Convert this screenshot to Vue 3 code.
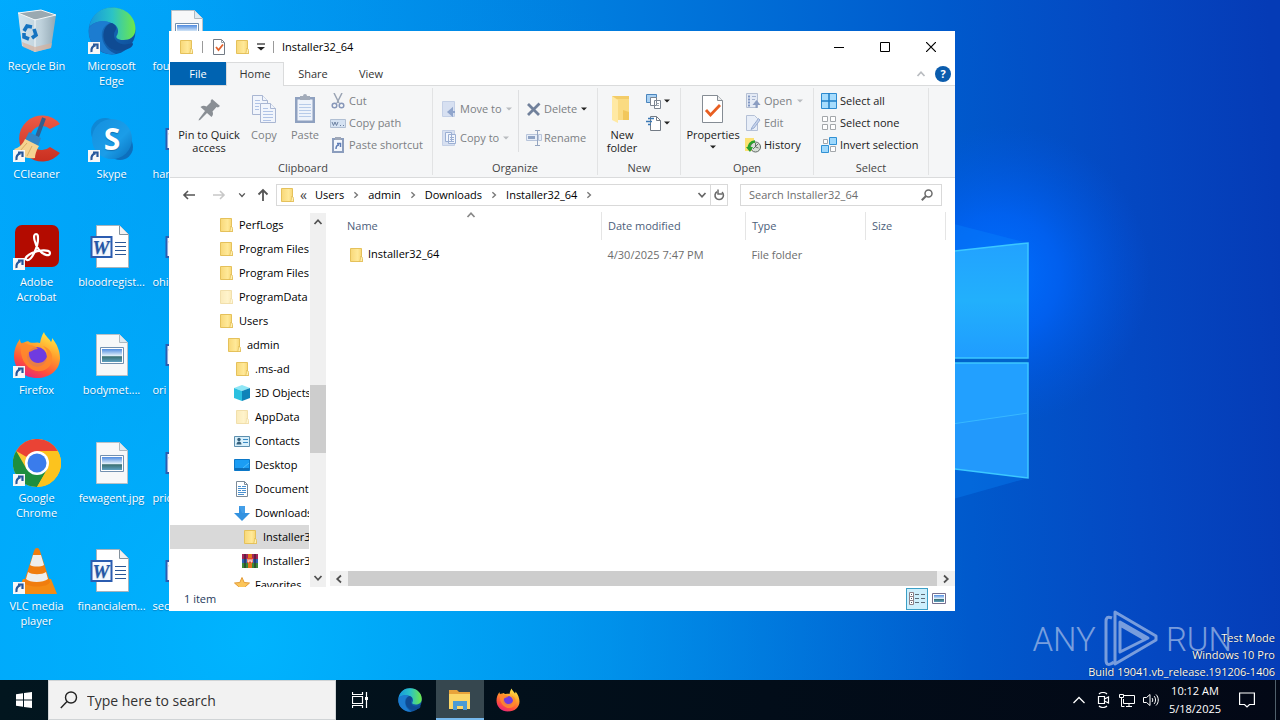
<template>
  <div class="screen">
    <!-- icon sprite -->
    <svg class="sprite" aria-hidden="true">
      <defs>
        <linearGradient id="gFolder" x1="0" x2="1"><stop offset="0" stop-color="#f8d878" /><stop offset="0.6" stop-color="#ffe999" /><stop offset="1" stop-color="#f6d26b" /></linearGradient>
        <linearGradient id="gEdgeTop" x1="0" x2="1"><stop offset="0" stop-color="#1597dd" /><stop offset="0.5" stop-color="#2bc3c6" /><stop offset="1" stop-color="#6ee848" /></linearGradient>
        <linearGradient id="gEdgeLow" x1="0" y1="0" x2="1" y2="1"><stop offset="0" stop-color="#1b7fd0" /><stop offset="1" stop-color="#0d4a94" /></linearGradient>
        <linearGradient id="gFox" x1="0.8" y1="0" x2="0.3" y2="1"><stop offset="0" stop-color="#fff04a" /><stop offset="0.4" stop-color="#ffa02c" /><stop offset="0.75" stop-color="#ff4f3c" /><stop offset="1" stop-color="#e5247c" /></linearGradient>
        <linearGradient id="gSkype" x1="0" y1="0" x2="1" y2="1"><stop offset="0" stop-color="#1490df" /><stop offset="0.6" stop-color="#1b9de8" /><stop offset="1" stop-color="#0a70bd" /></linearGradient>
        <linearGradient id="gBin" x1="0" x2="1"><stop offset="0" stop-color="#e4e9ec" /><stop offset="0.6" stop-color="#cfd5d9" /><stop offset="1" stop-color="#9fa8ae" /></linearGradient>
        <linearGradient id="gPhoto" x1="0" y1="0" x2="0" y2="1"><stop offset="0" stop-color="#4f8be0" /><stop offset="0.5" stop-color="#dcecf8" /><stop offset="0.6" stop-color="#3c7274" /><stop offset="1" stop-color="#5d9fc0" /></linearGradient>
        <linearGradient id="gRed" x1="0" y1="0" x2="0" y2="1"><stop offset="0" stop-color="#ec5b46" /><stop offset="1" stop-color="#c92f20" /></linearGradient>
      </defs>

      <symbol id="i-folder" viewBox="0 0 16 16">
        <path d="M2.500 1.500h11v10l1 1v2h-12z" fill="url(#gFolder)" stroke="#e5c15b" />
        <path d="M11.500 14.500c1-1 1-4 1-5l2 1v4z" fill="#fff0b0" stroke="#ddb548" stroke-width=".6" />
      </symbol>
      <symbol id="i-3d" viewBox="0 0 16 16">
        <path d="M0 3l8-3 8 3-8 3z" fill="#8fe6f5" /><path d="M0 3l8 3v10l-8-3z" fill="#2bc0e0" /><path d="M16 3L8 6v10l8-3z" fill="#0f83b8" />
      </symbol>
      <symbol id="i-contacts" viewBox="0 0 16 16">
        <path d="M.5 3.500h15v10H.5z" fill="#d7effb" stroke="#5d8fae" /><circle cx="5" cy="6.500" r="1.700" fill="#35607c" /><path d="M2.500 11.500c0-4 5-4 5 0z" fill="#35607c" /><path d="M9 6.500h5M9 9.500h5" stroke="#3b8bc4" />
      </symbol>
      <symbol id="i-desktop" viewBox="0 0 16 16">
        <path d="M.5 2.500h15v11H.5z" fill="#1b9df4" stroke="#0c78c8" /><path d="M1 12h14" stroke="#0a5fa6" stroke-width="1.500" /><path d="M9 11l6-5" stroke="#51bdfc" />
      </symbol>
      <symbol id="i-docs" viewBox="0 0 16 16">
        <path d="M2.500.5h8l3 3v12h-11z" fill="#fff" stroke="#7c8b99" /><path d="M10.500.5v3h3" fill="none" stroke="#7c8b99" /><path d="M4 5.500h3M8 5.500h4M4 7.500h8M4 9.500h3M8 9.500h4M4 11.500h8M4 13.500h6" stroke="#4a90cf" />
      </symbol>
      <symbol id="i-downloads" viewBox="0 0 16 16">
        <path d="M5 1h6v7h5l-8 8-8-8h5z" fill="#3392e0" /><path d="M5 1h6v7h5L8 8z" fill="#4ea6ec" opacity=".6" />
      </symbol>
      <symbol id="i-rar" viewBox="0 0 16 16">
        <path d="M0 1h16v5H0z" fill="#a52559" /><path d="M0 6h16v4H0z" fill="#2f62b5" /><path d="M0 10h16v5H0z" fill="#3b8a3a" /><path d="M6 1h4v14H6z" fill="#e2761b" /><path d="M5 5h6v5H5z" fill="#e24b32" /><path d="M6 6v3h1V7h2v2h1V6" stroke="#fff" fill="none" stroke-width=".8" /><path d="M3 1v14M13 1v14" stroke="#251a2b" />
      </symbol>
      <symbol id="i-star" viewBox="0 0 16 16">
        <path d="M8 .5l2.200 5 5.300.5-4 3.500 1.200 5.500L8 12.200 3.300 15l1.200-5.500L.5 6l5.300-.5z" fill="#fbc55a" stroke="#e39a35" />
      </symbol>

      <symbol id="i-check" viewBox="0 0 16 16">
        <path d="M2.500.5h8l3 3v12h-11z" fill="#fff" stroke="#737b85" /><path d="M10.500.5v3h3" fill="none" stroke="#9aa0a6" /><path d="M5 8l2.500 3L12 5.500" fill="none" stroke="#e2622c" stroke-width="1.800" />
      </symbol>
      <symbol id="i-caret" viewBox="0 0 6 6"><path d="M0 1.500h6L3 4.500z" fill="currentColor" /></symbol>
      <symbol id="i-menu" viewBox="0 0 8 8"><path d="M0 1h8" stroke="#222" stroke-width="1.200" /><path d="M0 4h8L4 7.500z" fill="#222" /></symbol>
      <symbol id="i-chev-down" viewBox="0 0 10 10"><path d="M1.500 3L5 6.800 8.500 3" fill="none" stroke="currentColor" stroke-width="1.700" /></symbol>
      <symbol id="i-chev-up" viewBox="0 0 10 10"><path d="M1.500 7L5 3.200 8.500 7" fill="none" stroke="currentColor" stroke-width="1.700" /></symbol>
      <symbol id="i-chev-left" viewBox="0 0 10 10"><path d="M7 1.500L3.200 5 7 8.500" fill="none" stroke="currentColor" stroke-width="1.700" /></symbol>
      <symbol id="i-chev-right" viewBox="0 0 10 10"><path d="M3 1.500L6.800 5 3 8.500" fill="none" stroke="currentColor" stroke-width="1.700" /></symbol>

      <symbol id="i-pin" viewBox="0 0 32 32">
        <path d="M19 6l8 7-2 1.500-1.500-.5-4 4.500c1 2 .5 4-1 5.500l-4.500-4L7 27l-1.500.5L6 26l6-8-4.500-4c2-1.500 4-1.500 6-.5l4.500-4.500L17.500 8z" fill="#8a8f95" />
      </symbol>
      <symbol id="i-copy" viewBox="0 0 32 32">
        <g fill="#f1f5fc" stroke="#a9b6d2"><path d="M4.500 2.500h10l5 5v14h-15z" /><path d="M14.500 2.500v5h5" /><path d="M12.500 10.500h10l5 5v14h-15z" /><path d="M22.500 10.500v5h5" /></g>
        <path d="M7 7.500h5M7 10.500h5M7 13.500h4M7 16.500h4M15 15.500h5M15 18.500h10M15 21.500h10M15 24.500h10M15 27.500h8" stroke="#b0c3e6" />
      </symbol>
      <symbol id="i-paste" viewBox="0 0 32 32">
        <path d="M6 4h20v26H6z" fill="#8fa1c0" /><path d="M8.500 6.500h15v21h-15z" fill="#eef3fb" /><path d="M11 3h3a2 2 0 0 1 4 0h3v4H11z" fill="#a2abb9" /><path d="M10 11.500h12M10 14.500h12M10 17.500h12M10 20.500h12M10 23.500h12" stroke="#b7cbe9" />
      </symbol>
      <symbol id="i-cut" viewBox="0 0 16 16">
        <path d="M4 0l5 10M12 0L7 10" stroke="#9aa4b4" stroke-width="1.500" /><circle cx="4.500" cy="12.500" r="2.300" fill="none" stroke="#8797b9" stroke-width="1.500" /><circle cx="11.500" cy="12.500" r="2.300" fill="none" stroke="#8797b9" stroke-width="1.500" />
      </symbol>
      <symbol id="i-path" viewBox="0 0 16 16">
        <path d="M.5 4.500h15v8H.5z" fill="#d5e2f2" stroke="#b0bfd3" /><path d="M2 7l1.500 3.500L5 7l1.500 3.500L8 7M10 10.500h1M13 10.500h1" stroke="#6c81a1" fill="none" />
      </symbol>
      <symbol id="i-shortcut" viewBox="0 0 16 16">
        <path d="M2 1h12v15H2z" fill="#8b9dbd" /><path d="M4 3h8v11H4z" fill="#f2f6fc" /><path d="M5 0h6v3H5z" fill="#9fa8b8" /><path d="M6 12c0-3 1-4 3-4M7 6.500h3.500V10" fill="none" stroke="#5d7cb5" stroke-width="1.500" />
      </symbol>
      <symbol id="i-moveto" viewBox="0 0 16 16">
        <path d="M.5.5h12v15H.5z" fill="#d7e0f1" stroke="#c4d0e6" /><path d="M13 11H8M10 8l-3.500 3 3.500 3z" stroke="#90a5cc" stroke-width="2" fill="#90a5cc" />
      </symbol>
      <symbol id="i-copyto" viewBox="0 0 16 16">
        <path d="M.5.5h12v15H.5z" fill="#d7e0f1" stroke="#c4d0e6" /><path d="M3.500 2.500h6v9h-6zM6.500 4.500h7v9h-7z" fill="#f1f5fc" stroke="#9bafd3" /><path d="M8 7.500h4M8 9.500h4M8 11.500h4" stroke="#9bafd3" />
      </symbol>
      <symbol id="i-delete" viewBox="0 0 16 16"><path d="M2 3l11 11M13.500 2.500L2 14" stroke="#71819b" stroke-width="2.800" /></symbol>
      <symbol id="i-rename" viewBox="0 0 16 16">
        <path d="M.5 4.500h11v6H.5zM12.500 4.500h3v6h-3z" fill="#e7eef8" stroke="#b7c4da" /><path d="M2 7.500h7" stroke="#8fa3c4" stroke-width="3" /><path d="M9 .5h5M9 15.500h5M11.500.5v15" stroke="#94a4bf" />
      </symbol>
      <symbol id="i-bigfolder" viewBox="0 0 32 32">
        <path d="M6 3h17v24H6z" fill="#f3cc68" /><path d="M11 6h12v21H11z" fill="#fadb82" /><path d="M6 3l6 4v23l-6-3z" fill="#ffe9a3" /><path d="M17 17l6 2v8h-6z" fill="#f2c75b" />
      </symbol>
      <symbol id="i-newitem" viewBox="0 0 16 16">
        <path d="M.5 1.500h10v8H.5z" fill="#a9d1f3" stroke="#4b85bd" /><path d="M4.500 4.500h6v8h-6zM8.500 7.500h6v8h-6z" fill="#fff" stroke="#7b8490" /><path d="M10 10.500h3M10 12.500h3" stroke="#9aa3ad" />
      </symbol>
      <symbol id="i-easy" viewBox="0 0 16 16">
        <path d="M4.500 1.500h6l4 4v10h-10z" fill="#fff" stroke="#737b85" /><path d="M10.500 1.500v4h4" fill="none" stroke="#737b85" /><path d="M2 3.500h6M0 6.500h6M2 9.500h3" stroke="#3b78b5" stroke-width="1.300" />
      </symbol>
      <symbol id="i-props" viewBox="0 0 32 32">
        <path d="M5.500 2.500h15l5 5v22h-20z" fill="#fff" stroke="#858c94" /><path d="M20.500 2.500v5h5" fill="#ececec" stroke="#858c94" /><path d="M9 17l4.500 5L23 12" fill="none" stroke="#e85f22" stroke-width="2.800" />
      </symbol>
      <symbol id="i-open" viewBox="0 0 16 16">
        <path d="M1.500.5h11v14h-11z" fill="#e4eaf5" stroke="#b4bfd3" /><path d="M3 3.500h2M3 6.500h2M3 9.500h2M3 12.500h2" stroke="#8197c3" stroke-width="2" /><path d="M7 3.500h4M7 6.500h3" stroke="#a5b3cf" /><path d="M11.500 15V9M9.500 11l2-2.500 2 2.500z" stroke="#8b9dc2" stroke-width="2" fill="#8b9dc2" />
      </symbol>
      <symbol id="i-edit" viewBox="0 0 16 16">
        <path d="M1.500.5h8l3 3v12h-11z" fill="#e8eef8" stroke="#b4c0d6" /><path d="M13.500 3.500l-6 8-1.500 3 3-1.500 6-8z" fill="#c8d5ec" stroke="#98abd0" />
      </symbol>
      <symbol id="i-history" viewBox="0 0 16 16">
        <path d="M0 1h9v13H0z" fill="#fbe172" /><circle cx="10.500" cy="10" r="5" fill="#d7dfd8" stroke="#606a64" /><path d="M10.500 6v4l3 1M8 12l5-5" stroke="#4d5952" fill="none" stroke-width=".8" /><path d="M4 12a6 6 0 0 1 6-7.500" stroke="#28a22d" stroke-width="2.500" fill="none" /><path d="M1 10l4 5 3-5z" fill="#28a22d" />
      </symbol>
      <symbol id="i-all" viewBox="0 0 16 16"><path d="M.5.500h15v15H.5z" fill="#a6dcfd" stroke="#2d8bd0" /><path d="M8 0v16M0 8h16" stroke="#1f7ec6" stroke-width="1.500" /></symbol>
      <symbol id="i-none" viewBox="0 0 16 16"><path d="M1.500 1.500h5v5h-5zM9.500 1.500h5v5h-5zM1.500 9.500h5v5h-5zM9.500 9.500h5v5h-5z" fill="#fff" stroke="#a3a7ab" /></symbol>
      <symbol id="i-invert" viewBox="0 0 16 16"><path d="M2.500 2.500h4v4h-4zM9.500 9.500h5v5h-5z" fill="#fff" stroke="#a3a7ab" /><path d="M8.500.5h7v7h-7zM.5 8.500h7v7h-7z" fill="#9ed8fc" stroke="#3191d4" /></symbol>
      <symbol id="i-left" viewBox="0 0 16 16"><path d="M14 8H3M7 4L3 8l4 4" fill="none" stroke="currentColor" stroke-width="1.600" /></symbol>
      <symbol id="i-up" viewBox="0 0 16 16"><path d="M8 14V3M3.500 7.500L8 3l4.500 4.500" fill="none" stroke="currentColor" stroke-width="1.800" /></symbol>
      <symbol id="i-right" viewBox="0 0 16 16"><path d="M2 8h11M9 4l4 4-4 4" fill="none" stroke="currentColor" stroke-width="1.600" /></symbol>
      <symbol id="i-refresh" viewBox="0 0 12 12"><path d="M9 3.200A4.200 4.200 0 1 1 4 2.800" fill="none" stroke="#6b6b6b" stroke-width="1.600" /><path d="M5.500 1v4.500h4.500" fill="none" stroke="#6b6b6b" stroke-width="1.500" transform="translate(-.5 -.5)" /></symbol>
      <symbol id="i-find" viewBox="0 0 12 12"><circle cx="7.500" cy="4.500" r="3.500" fill="none" stroke="#6b6b6b" stroke-width="1.500" /><path d="M5 7L.8 11.200" stroke="#6b6b6b" stroke-width="2" /></symbol>
      <symbol id="i-details" viewBox="0 0 16 16"><path d="M.5 1.500h4v4h-4zM.5 5.500h4v4h-4zM.5 9.500h4v4h-4z" fill="#fff" stroke="#8c7f86" /><path d="M2 3.500h1M2 7.500h1M2 11.500h1" stroke="#456" /><path d="M6 3.500h4M12 3.500h4M6 7.500h4M12 7.500h4M6 11.500h4M12 11.500h4" stroke="#5d6d78" /></symbol>
      <symbol id="i-thumbs" viewBox="0 0 16 16"><path d="M1.500 2.500h13v10h-13z" fill="#fff" stroke="#76708f" /><path d="M3 4h10v7H3z" fill="url(#gPhoto)" /></symbol>

      <!-- desktop icons -->
      <symbol id="d-arrow" viewBox="0 0 48 48"><path d="M0 35h12v12H0z" fill="#f7f7f7" /><path d="M3.500 45c-.5-4 1-6 4-6.500M5 37.500h4.500V42" fill="none" stroke="#27589c" stroke-width="2.200" /></symbol>
      <symbol id="d-bin" viewBox="0 0 48 48">
        <path d="M5 6l23-3 15 5-5 33-16 4-13-6z" fill="url(#gBin)" opacity=".92" /><path d="M5 6l23-3 15 5-21 5z" fill="#9aa9b1" stroke="#f3f6f7" /><path d="M22 12v33" stroke="#f5f7f8" /><path d="M9 35l13 5 17-4-1 5-16 4-12-5z" fill="#d5b09c" opacity=".7" /><g stroke="#1573c0" stroke-width="3.600" fill="none"><path d="M11 24l3-5 5 1" /><path d="M21 22l2 6-4 3" /><path d="M16 32l-5-2v-4" /></g>
      </symbol>
      <symbol id="d-edge" viewBox="0 0 48 48">
        <circle cx="24" cy="24" r="23.500" fill="url(#gEdgeLow)" /><path d="M1 20C4 7 13 .5 24 .5 38 .5 47.500 10 47.500 22c0 8-6 11-12 11-5 0-8-2-7-4 3-4 2-11-5-13C14 13 5 15 1 20z" fill="url(#gEdgeTop)" /><path d="M1 21c5-7 15-9 22-5-7 1-10 8-9 14 1 9 8 15 14 17C15 49 3 40 1 28z" fill="#1c7cd0" /><path d="M23 16c-6 2-9 9-7 17 3 9 13 14 26 8 3-2 4-5 2-5-10 4-18-1-18-8 0-4 3-5 2-8-1-2-3-4-5-4z" fill="#0f4b93" />
      </symbol>
      <symbol id="d-ccleaner" viewBox="0 0 48 48">
        <path d="M47 9A23 23 0 1 0 47 38l-10-6a12 12 0 1 1 0-18z" fill="url(#gRed)" /><path d="M31 3l-7 19" stroke="#355f8d" stroke-width="4" /><path d="M16 17l12 6-3 8-13-6z" fill="#3286c5" /><path d="M12 24l14 7c-3 5-4 9-4 12-8 1-15-1-21-9 5-1 9-5 11-10z" fill="#f5d391" /><path d="M14 28L7 36M19 31l-5 10" stroke="#d9ad63" />
      </symbol>
      <symbol id="d-skype" viewBox="0 0 48 48">
        <circle cx="17" cy="17" r="14" fill="#0f88d5" /><circle cx="32" cy="32" r="13" fill="#0d6fbd" /><circle cx="24" cy="24" r="20" fill="url(#gSkype)" /><text x="24" y="35" text-anchor="middle" font-size="30" font-weight="700" fill="#fff">S</text>
      </symbol>
      <symbol id="d-acrobat" viewBox="0 0 48 48">
        <rect x="2" y="2" width="44" height="42" rx="7" fill="#b30b00" /><path d="M23 11c-4 0-1 11 3 16 4 5 11 7 11 3 0-4-12-3-18 0-6 3-8 6-5 7 5 1 11-14 11-21 0-3 0-5-2-5z" fill="none" stroke="#fff" stroke-width="2.200" />
      </symbol>
      <symbol id="d-firefox" viewBox="0 0 48 48">
        <path d="M31 1c1 4 5 6 7 10 1-1 1-3 1-4 5 6 8 13 8 20 0 12-10 20-23 20S1 38 1 25c0-6 2-12 6-17 0 3 1 4 2 5 3-3 5-2 6-3 4 4 8 0 12 2 1-5 2-8 4-11z" fill="url(#gFox)" /><circle cx="24" cy="26" r="10" fill="#6f3be0" /><path d="M8 12c4-1 6 1 8 2 3 0 7 1 9 4-5 0-6 3-9 3-1 9 8 14 15 9 5-4 4-11-1-15 7 2 10 8 9 14-1 8-8 12-16 11C12 37 6 26 8 12z" fill="#ff8a2b" opacity=".85" />
      </symbol>
      <symbol id="d-chrome" viewBox="0 0 48 48">
        <circle cx="24" cy="24" r="24" fill="#fcc934" /><path d="M24 24L3.200 12A24 24 0 0 1 44.800 12H24z" fill="#ea4335" /><path d="M3.200 12A24 24 0 0 0 24 48l10.400-18H13.600z" fill="#1e8e3e" /><path d="M24 12h20.800A24 24 0 0 1 24 48l10.400-18z" fill="#fcc31e" /><circle cx="24" cy="24" r="12" fill="#fff" /><circle cx="24" cy="24" r="9.500" fill="#3a7cec" />
      </symbol>
      <symbol id="d-vlc" viewBox="0 0 48 48">
        <path d="M10 32h28l6 15H4z" fill="#f48b14" /><path d="M24 1c2 0 2 1 3 3l10 31c-2 6-24 6-26 0L21 4c1-2 1-3 3-3z" fill="#f07d0e" /><path d="M20 8h8l3 10c-3 2-11 2-14 0zM15 25c4 3 14 3 18 0l2 7c-5 4-18 4-22 0z" fill="#eeeeec" />
      </symbol>
      <symbol id="d-word" viewBox="0 0 48 48">
        <path d="M8.500 2.500h23l9 9v33h-32z" fill="#fff" stroke="#a7b3bc" /><path d="M31.500 2.500v9h9" fill="#f1f1f1" stroke="#83919c" /><path d="M27 19.500h11M27 23.500h11M27 27.500h11M27 31.500h11" stroke="#2b5797" /><path d="M3.500 14h20v20h-20z" fill="#f6f9ff" stroke="#2b5cb0" stroke-width="2" /><text x="13" y="31" text-anchor="middle" font-size="19" font-weight="700" font-style="italic" fill="#2456a8" class="serif">W</text>
      </symbol>
      <symbol id="d-image" viewBox="0 0 48 48">
        <path d="M8.500 3.500h23l8 8v33h-31z" fill="#f7f8f9" stroke="#b9c1c7" /><path d="M31.500 3.500v8h8" fill="#ddeaf2" stroke="#aeb9c1" /><path d="M12.500 16.500h23v16h-23z" fill="#fff" stroke="#7290b0" /><path d="M14 18h20v13H14z" fill="url(#gPhoto)" />
      </symbol>
      <symbol id="d-explorer" viewBox="0 0 24 24">
        <path d="M1 2h8l2 2h11v3H1z" fill="#e8a33a" /><path d="M1 6h21v15H1z" fill="#fbd667" /><path d="M5 13h14v9h-4v-4H9v4H5z" fill="#4a9bd4" />
      </symbol>
    </svg>

    <main class="desktop">
      <svg class="wallpaper" viewBox="0 0 1280 680" preserveAspectRatio="none" aria-hidden="true">
        <defs>
          <linearGradient id="wBase" gradientUnits="userSpaceOnUse" x1="0" y1="300" x2="1280" y2="240">
            <stop offset="0" stop-color="#00adff" /><stop offset="0.14" stop-color="#00a6fa" /><stop offset="0.45" stop-color="#0080e0" /><stop offset="0.75" stop-color="#0059cc" /><stop offset="0.88" stop-color="#0448c2" /><stop offset="1" stop-color="#053bb6" />
          </linearGradient>
          <radialGradient id="wGlow" gradientUnits="userSpaceOnUse" cx="1000" cy="275" r="150">
            <stop offset="0" stop-color="#0070ff" /><stop offset="0.4" stop-color="#0066ff" stop-opacity=".7" /><stop offset="1" stop-color="#0058e8" stop-opacity="0" />
          </radialGradient>
          <radialGradient id="wLow" gradientUnits="userSpaceOnUse" cx="250" cy="640" r="720">
            <stop offset="0" stop-color="#00b6ff" stop-opacity=".9" /><stop offset="0.5" stop-color="#00a4f6" stop-opacity=".5" /><stop offset="1" stop-color="#0088e8" stop-opacity="0" />
          </radialGradient>
          <linearGradient id="wPane" x1="0" y1="0" x2="0" y2="1"><stop offset="0" stop-color="#22a2ff" /><stop offset="0.5" stop-color="#22b0fc" /><stop offset="1" stop-color="#1f9cff" /></linearGradient>
        </defs>
        <path d="M0 0h1280v680H0z" fill="url(#wBase)" />
        <path d="M0 0h1280v680H0z" fill="url(#wLow)" />
        <path d="M0 0h1280v680H0z" fill="url(#wGlow)" />
        <path d="M900 210l128 33v235l-128 36z" fill="#0a8cff" opacity=".3" />
        <path d="M800 268l228-25v115H800z" fill="url(#wPane)" />
        <path d="M800 363h228v115l-228-28z" fill="#2299fc" />
        <path d="M800 363h228v50l-228 33z" fill="#22a0ff" />
        <path d="M800 358h228v5H800z" fill="#0064cc" />
        <path d="M800 268l228-25v115H800M800 363h228v115l-228-28" fill="none" stroke="#3cc8ff" stroke-width="1.500" />
        <path d="M800 446l228-33" stroke="#38b8ff" />
      </svg>

      <div class="shortcuts">
        <a v-for="item in shortcuts" :key="item.label" href="#" :class="['shortcut', { covered: item.covered }]">
          <svg class="i48"><use :href="'#d-' + item.icon" /><use v-if="item.link" href="#d-arrow" /></svg>
          <span>{{ item.label }}</span>
        </a>
      </div>

      <div class="watermark" aria-hidden="true">
        <span>ANY</span>
        <svg viewBox="0 0 56 60"><g fill="none" stroke="#9fb9e6" stroke-width="3" stroke-linejoin="round"><path d="M9 8c-5-2-6 0-6 4v38c0 5 3 6 8 2" /><path d="M12 46V2l41 24v4L12 54z" /><path d="M17 42V12l28 16zM17 15l26 15" /></g></svg>
        <span>RUN</span>
      </div>
      <p class="build">Test Mode<br />Windows 10 Pro<br />Build 19041.vb_release.191206-1406</p>

      <section class="window">
        <header class="titlebar">
          <svg class="i16"><use href="#i-folder" /></svg>
          <i class="bar"></i>
          <button aria-label="Properties"><svg class="i16"><use href="#i-check" /></svg></button>
          <button aria-label="New folder"><svg class="i16"><use href="#i-folder" /></svg></button>
          <button aria-label="Customize"><svg class="i8"><use href="#i-menu" /></svg></button>
          <i class="bar"></i>
          <h1>Installer32_64</h1>
          <div class="controls">
            <button aria-label="Minimize"><svg class="i10" viewBox="0 0 10 10"><path d="M0 5.500h10" stroke="#000" /></svg></button>
            <button aria-label="Maximize"><svg class="i10" viewBox="0 0 10 10"><path d="M.5.5h9v9h-9z" fill="none" stroke="#000" /></svg></button>
            <button aria-label="Close"><svg class="i10" viewBox="0 0 10 10"><path d="M0 0l10 10M10 0L0 10" stroke="#000" stroke-width="1.200" /></svg></button>
          </div>
        </header>

        <nav class="tabs">
          <button v-for="tab in tabs" :key="tab" :class="['tab', { file: tab === 'File', active: tab === activeTab }]" @click="activeTab = tab">{{ tab }}</button>
          <div class="tab-tools">
            <button aria-label="Minimize the Ribbon"><svg class="i10 pale"><use href="#i-chev-up" /></svg></button>
            <button class="help" aria-label="Help">?</button>
          </div>
        </nav>

        <div class="ribbon">
          <div class="group clipboard">
            <div class="group-body">
              <button class="big pin"><svg class="i32"><use href="#i-pin" /></svg>Pin to Quick access</button>
              <button class="big copy off"><svg class="i32"><use href="#i-copy" /></svg>Copy</button>
              <button class="big paste off"><svg class="i32"><use href="#i-paste" /></svg>Paste</button>
              <div class="stack">
                <button class="small off"><svg class="i16"><use href="#i-cut" /></svg>Cut</button>
                <button class="small off"><svg class="i16"><use href="#i-path" /></svg>Copy path</button>
                <button class="small off"><svg class="i16"><use href="#i-shortcut" /></svg>Paste shortcut</button>
              </div>
            </div>
            <div class="group-name">Clipboard</div>
          </div>

          <div class="group organize">
            <div class="group-body">
              <div class="stack wide first">
                <button class="small off"><svg class="i16"><use href="#i-moveto" /></svg>Move to<svg class="i6 pale"><use href="#i-caret" /></svg></button>
                <button class="small off"><svg class="i16"><use href="#i-copyto" /></svg>Copy to<svg class="i6 pale"><use href="#i-caret" /></svg></button>
              </div>
              <div class="stack wide">
                <button class="small off"><svg class="i16"><use href="#i-delete" /></svg>Delete<svg class="i6 dark"><use href="#i-caret" /></svg></button>
                <button class="small off"><svg class="i16"><use href="#i-rename" /></svg>Rename</button>
              </div>
            </div>
            <div class="group-name">Organize</div>
          </div>

          <div class="group new">
            <div class="group-body">
              <button class="big folder"><svg class="i32"><use href="#i-bigfolder" /></svg>New folder</button>
              <div class="stack">
                <button class="small icon-only" aria-label="New item"><svg class="i16"><use href="#i-newitem" /></svg><svg class="i6"><use href="#i-caret" /></svg></button>
                <button class="small icon-only" aria-label="Easy access"><svg class="i16"><use href="#i-easy" /></svg><svg class="i6"><use href="#i-caret" /></svg></button>
              </div>
            </div>
            <div class="group-name">New</div>
          </div>

          <div class="group open">
            <div class="group-body">
              <button class="big props"><svg class="i32"><use href="#i-props" /></svg>Properties<svg class="i6"><use href="#i-caret" /></svg></button>
              <div class="stack">
                <button class="small off"><svg class="i16"><use href="#i-open" /></svg>Open<svg class="i6 pale"><use href="#i-caret" /></svg></button>
                <button class="small off"><svg class="i16"><use href="#i-edit" /></svg>Edit</button>
                <button class="small"><svg class="i16"><use href="#i-history" /></svg>History</button>
              </div>
            </div>
            <div class="group-name">Open</div>
          </div>

          <div class="group select">
            <div class="group-body">
              <div class="stack">
                <button class="small"><svg class="i16"><use href="#i-all" /></svg>Select all</button>
                <button class="small"><svg class="i16"><use href="#i-none" /></svg>Select none</button>
                <button class="small"><svg class="i16"><use href="#i-invert" /></svg>Invert selection</button>
              </div>
            </div>
            <div class="group-name">Select</div>
          </div>
        </div>

        <div class="address-row">
          <button aria-label="Back"><svg class="i16"><use href="#i-left" /></svg></button>
          <button class="pale" aria-label="Forward"><svg class="i16"><use href="#i-right" /></svg></button>
          <button class="recent" aria-label="Recent locations"><svg class="i8"><use href="#i-chev-down" /></svg></button>
          <button class="up" aria-label="Up"><svg class="i16"><use href="#i-up" /></svg></button>
          <div class="address">
            <svg class="i16"><use href="#i-folder" /></svg>
            <span class="more">«</span>
            <template v-for="part in path" :key="part">
              <a href="#">{{ part }}</a>
              <svg class="i8"><use href="#i-chev-right" /></svg>
            </template>
            <button class="drop" aria-label="Previous locations"><svg class="i10"><use href="#i-chev-down" /></svg></button>
            <button class="refresh" aria-label="Refresh"><svg class="i12"><use href="#i-refresh" /></svg></button>
          </div>
          <label class="search">
            <input v-model="query" type="text" placeholder="Search Installer32_64" aria-label="Search Installer32_64" />
            <svg class="i12"><use href="#i-find" /></svg>
          </label>
        </div>

        <div class="content">
          <ul class="tree">
            <li v-for="node in tree" :key="node.id" :class="['level-' + node.level, { selected: node.selected }]">
              <a href="#"><svg :class="['i16', { hidden: node.hidden }]"><use :href="'#i-' + node.icon" /></svg>{{ node.name }}</a>
            </li>
          </ul>
          <div class="vscroll">
            <button aria-label="Scroll up"><svg class="i10"><use href="#i-chev-up" /></svg></button>
            <div class="before"></div>
            <div class="thumb"></div>
            <div class="after"></div>
            <button aria-label="Scroll down"><svg class="i10"><use href="#i-chev-down" /></svg></button>
          </div>
          <div class="files">
            <table>
              <thead>
                <tr>
                  <th class="c-name"><button>Name</button><svg class="i10 sort"><use href="#i-chev-up" /></svg></th>
                  <th class="c-date"><button>Date modified</button></th>
                  <th class="c-type"><button>Type</button></th>
                  <th class="c-size"><button>Size</button></th>
                  <th></th>
                </tr>
              </thead>
              <tbody>
                <tr v-for="file in files" :key="file.name">
                  <td class="file-name"><svg class="i16"><use href="#i-folder" /></svg>{{ file.name }}</td>
                  <td>{{ file.modified }}</td>
                  <td>{{ file.type }}</td>
                  <td></td>
                  <td></td>
                </tr>
              </tbody>
            </table>
            <div class="hscroll">
              <button aria-label="Scroll left"><svg class="i10"><use href="#i-chev-left" /></svg></button>
              <div class="thumb"></div>
              <button aria-label="Scroll right"><svg class="i10"><use href="#i-chev-right" /></svg></button>
            </div>
          </div>
        </div>

        <footer class="status">
          <span>{{ files.length }} item</span>
          <button class="mode active" aria-label="Details view"><svg class="i16"><use href="#i-details" /></svg></button>
          <button class="mode" aria-label="Large icons view"><svg class="i16"><use href="#i-thumbs" /></svg></button>
        </footer>
      </section>
    </main>

    <footer class="taskbar">
      <button class="task" aria-label="Start"><svg class="i16" viewBox="0 0 16 16"><path d="M0 2.300L7 1.200v6.300H0zM8 1l8-1v7.500H8zM0 8.500h7v6.300l-7-1zM8 8.500h8V16l-8-1.100z" fill="#fff" /></svg></button>
      <label class="task-search">
        <svg class="i18" viewBox="0 0 18 18"><circle cx="11" cy="6.500" r="5.500" fill="none" stroke="#222" stroke-width="1.400" /><path d="M7 10.500L.8 17" stroke="#222" stroke-width="1.400" /></svg>
        <input type="text" placeholder="Type here to search" aria-label="Type here to search" />
      </label>
      <button class="task" aria-label="Task View"><svg class="i16" viewBox="0 0 16 16"><path d="M.5 0v2.500h10V0M.5 4.500h10v7H.5zM.5 16v-2.500h10V16M14.500 0v16" fill="none" stroke="#fff" stroke-width="1.200" /><path d="M13 5h3v3h-3z" fill="#fff" /></svg></button>
      <button class="task edge" aria-label="Microsoft Edge"><svg class="i24"><use href="#d-edge" /></svg></button>
      <button class="task active" aria-label="File Explorer"><svg class="i24"><use href="#d-explorer" /></svg></button>
      <button class="task" aria-label="Firefox"><svg class="i24"><use href="#d-firefox" /></svg></button>
      <div class="tray">
        <button aria-label="Show hidden icons"><svg class="i16" viewBox="0 0 16 16"><path d="M2.500 11L8 5.500l5.500 5.500" fill="none" stroke="#fff" stroke-width="1.300" /></svg></button>
        <button aria-label="Meet Now"><svg class="i16" viewBox="0 0 16 16"><path d="M3.500 4.500h6v7h-6zM9.500 7l4-2v6l-4-2M4 2c2-2 6-2 8 0M4 14c2 2 6 2 8 0" fill="none" stroke="#fff" stroke-width="1.200" /></svg></button>
        <button aria-label="Network"><svg class="i16" viewBox="0 0 16 16"><path d="M5 3.500h10.500v8H4.500V7M7 14.500h6M10 11.500v3M.5 2.500h4v3h-4zM2.500 5.500v9h3" fill="none" stroke="#fff" /></svg></button>
        <button aria-label="Volume"><svg class="i16" viewBox="0 0 16 16"><path d="M.5 5.500h3l3.500-3v11l-3.500-3h-3zM9 6c1 1 1 3 0 4M11 4c2 2 2 6 0 8M13 2.500c3 3 3 8 0 11" fill="none" stroke="#fff" /></svg></button>
        <div class="clock">10:12 AM<br />5/18/2025</div>
        <button class="action" aria-label="Notifications"><svg class="i16" viewBox="0 0 16 16"><path d="M.6 1h14.800v11.500H10.500L8 15l-2.500-2.500H.6z" fill="none" stroke="#fff" stroke-width="1.200" /></svg></button>
        <i class="peek"></i>
      </div>
    </footer>
  </div>
</template>

<script setup>
import { ref } from 'vue';

const tabs = ['File', 'Home', 'Share', 'View'];
const activeTab = ref('Home');
const query = ref('');
const path = ['Users', 'admin', 'Downloads', 'Installer32_64'];

// Column by column, top to bottom
const shortcuts = [
  { label: 'Recycle Bin', icon: 'bin' },
  { label: 'CCleaner', icon: 'ccleaner', link: true },
  { label: 'Adobe Acrobat', icon: 'acrobat', link: true },
  { label: 'Firefox', icon: 'firefox', link: true },
  { label: 'Google Chrome', icon: 'chrome', link: true },
  { label: 'VLC media player', icon: 'vlc', link: true },
  { label: 'Microsoft Edge', icon: 'edge', link: true },
  { label: 'Skype', icon: 'skype', link: true },
  { label: 'bloodregist...', icon: 'word' },
  { label: 'bodymet....', icon: 'image' },
  { label: 'fewagent.jpg', icon: 'image' },
  { label: 'financialem...', icon: 'word' },
  { label: 'fou', icon: 'image', covered: true },
  { label: 'har', icon: 'word', covered: true },
  { label: 'ohi', icon: 'word', covered: true },
  { label: 'ori', icon: 'word', covered: true },
  { label: 'pric', icon: 'word', covered: true },
  { label: 'sec', icon: 'word', covered: true }
];

const tree = [
  { id: 1, name: 'PerfLogs', icon: 'folder', level: 0 },
  { id: 2, name: 'Program Files', icon: 'folder', level: 0 },
  { id: 3, name: 'Program Files (x86)', icon: 'folder', level: 0 },
  { id: 4, name: 'ProgramData', icon: 'folder', level: 0, hidden: true },
  { id: 5, name: 'Users', icon: 'folder', level: 0 },
  { id: 6, name: 'admin', icon: 'folder', level: 1 },
  { id: 7, name: '.ms-ad', icon: 'folder', level: 2 },
  { id: 8, name: '3D Objects', icon: '3d', level: 2 },
  { id: 9, name: 'AppData', icon: 'folder', level: 2, hidden: true },
  { id: 10, name: 'Contacts', icon: 'contacts', level: 2 },
  { id: 11, name: 'Desktop', icon: 'desktop', level: 2 },
  { id: 12, name: 'Documents', icon: 'docs', level: 2 },
  { id: 13, name: 'Downloads', icon: 'downloads', level: 2 },
  { id: 14, name: 'Installer32_64', icon: 'folder', level: 3, selected: true },
  { id: 15, name: 'Installer32_64', icon: 'rar', level: 3 },
  { id: 16, name: 'Favorites', icon: 'star', level: 2 }
];

const files = [{ name: 'Installer32_64', modified: '4/30/2025 7:47 PM', type: 'File folder' }];
</script>

<style>
body { margin: 0; overflow: hidden; }
</style>

<style scoped>
.screen { display: flex; flex-direction: column; height: 100vh; font-family: "Open Sans", "Noto Sans", sans-serif; font-size: 11px; line-height: 14px; color: #000; }
.sprite { position: absolute; width: 0; height: 0; }
.serif { font-family: "Liberation Serif", serif; }
button { display: flex; align-items: center; justify-content: center; border: none; background: none; padding: 0; margin: 0; font: inherit; color: inherit; white-space: nowrap; }
a { color: inherit; text-decoration: none; }
svg { display: block; flex: none; }
input { border: none; background: none; outline: none; padding: 0; font: inherit; min-width: 0; flex: 1; }
.i6 { width: 6px; height: 6px; }
.i8 { width: 8px; height: 8px; }
.i10 { width: 10px; height: 10px; }
.i12 { width: 12px; height: 12px; }
.i16 { width: 16px; height: 16px; }
.i18 { width: 18px; height: 18px; }
.i24 { width: 24px; height: 24px; }
.i32 { width: 32px; height: 32px; }
.i48 { width: 48px; height: 48px; }
.pale { color: #b9bcc0; }
.dark { color: #222; }

/* Desktop */
.desktop { position: relative; flex: 1; min-height: 0; overflow: hidden; }
.wallpaper { position: absolute; inset: 0; width: 100%; height: 100%; }
.shortcuts { position: relative; display: grid; grid-auto-flow: column; grid-template-rows: repeat(6, 108px); grid-auto-columns: 75px; margin-left: -1px; }
.shortcut { display: flex; flex-direction: column; align-items: center; padding: 7px 0 0; color: #fff; line-height: 15px; text-align: center; text-shadow: 0 1px 1px rgba(0, 40, 90, 0.35); }
.shortcut span { width: 68px; padding-top: 3px; white-space: normal; }
.covered span { text-align: left; white-space: nowrap; }
.watermark { position: absolute; right: 48px; bottom: 10px; display: flex; align-items: center; gap: 7px; color: #9fb9e6; font-family: Roboto, sans-serif; font-size: 33px; font-weight: 300; line-height: 60px; opacity: 0.75; }
.watermark svg { width: 56px; height: 60px; }
.build { position: absolute; right: 5px; bottom: 0; margin: 0; color: #fff; text-align: right; line-height: 17px; text-shadow: 0 0 1px #000; }

/* Explorer window */
.window { position: absolute; inset: 31px 325px 69px 169px; display: flex; flex-direction: column; box-sizing: border-box; padding-left: 1px; background: #fff; }
.titlebar { display: flex; align-items: center; height: 31px; padding-left: 8px; gap: 8px; }
.titlebar .bar { width: 1px; height: 12px; background: #9a9a9a; }
.titlebar button + button { margin-left: -1px; }
.titlebar h1 { margin: 0; font-size: 11px; font-weight: 400; }
.controls { display: flex; margin-left: auto; height: 100%; padding-right: 1px; }
.controls button { width: 46px; }
.controls button + button { margin-left: 0; }
.tabs { display: flex; height: 24px; border-bottom: 1px solid #dadbdc; box-sizing: border-box; }
.tab { width: 58px; height: 23px; color: #333; }
.tab.file { width: 56px; background: #0063b1; color: #fff; }
.tab.active { height: 24px; box-sizing: border-box; padding-bottom: 1px; background: #f5f6f7; border: 1px solid #dadbdc; border-bottom: none; }
.tab-tools { display: flex; align-items: center; gap: 9px; margin-left: auto; padding-right: 4px; }
.help { width: 16px; height: 16px; border-radius: 50%; background: #0b5cad; color: #fff; font-weight: 700; }

/* Ribbon */
.ribbon { display: flex; height: 92px; box-sizing: border-box; padding: 2px 0; background: #f5f6f7; border-bottom: 1px solid #dadbdc; color: #222; }
.group { display: flex; flex-direction: column; box-sizing: border-box; border-right: 1px solid #e2e3e4; }
.group-body { display: flex; flex: 1; padding-top: 2px; }
.group-name { text-align: center; color: #444; line-height: 14px; }
.clipboard { width: 263px; padding-left: 4px; }
.organize { width: 165px; }
.new { width: 83px; }
.open { width: 133px; }
.select { width: 115px; }
.clipboard .stack { padding-left: 4px; }
.select .stack { padding-left: 7px; }
.big { flex-direction: column; justify-content: flex-start; padding-top: 3px; line-height: 13px; white-space: normal; }
.big .i32 { margin-bottom: 3px; }
.big .i6 { margin-top: 3px; }
.pin { width: 70px; }
.copy { width: 40px; }
.paste { width: 42px; }
.folder { width: 48px; }
.props { width: 64px; }
.off { color: #7c8084; }
.stack { display: flex; flex-direction: column; align-items: flex-start; }
.small { height: 22px; gap: 3px; }
.small .i6 { margin-left: 2px; }
.icon-only { gap: 0; }
.wide { gap: 7px; padding: 8px 0 0 7px; }
.wide .small { gap: 2px; }
.first { width: 76px; height: 54px; padding-left: 9px; border-right: 1px solid #dedfe1; }

/* Address bar */
.address-row { display: flex; align-items: center; height: 34px; padding: 0 13px 0 11px; color: #555; }
.address-row > button { width: 16px; margin-right: 14px; }
.address-row > .pale { margin-right: 7px; color: #c8c8c8; }
.address-row > .recent { margin-right: 5px; }
.address-row > .up { margin-right: 5px; }
.address { display: flex; align-items: center; flex: 1; height: 22px; box-sizing: border-box; border: 1px solid #d9d9d9; padding-left: 2px; color: #000; }
.address .more { margin: 0 8px 0 5px; color: #444; font-size: 14px; }
.address > .i8 { margin: 0 8px; color: #777; }
.drop { width: 16px; height: 100%; margin-left: auto; color: #666; }
.refresh { width: 17px; height: 100%; border-left: 1px solid #d9d9d9; }
.search { display: flex; align-items: center; width: 202px; height: 22px; box-sizing: border-box; margin-left: 12px; padding: 0 8px; border: 1px solid #d9d9d9; }
.search input::placeholder { color: #6d6d6d; opacity: 1; }

/* Tree and file list */
.content { display: flex; flex: 1; min-height: 0; }
.tree { width: 139px; margin: 0 1px 0 0; padding: 1px 0 0; overflow: hidden; list-style: none; box-sizing: border-box; }
.tree a { display: flex; align-items: center; gap: 5px; height: 24px; padding-left: 48px; white-space: nowrap; }
.tree .level-1 a { padding-left: 56px; }
.tree .level-2 a { padding-left: 64px; }
.tree .level-3 a { padding-left: 72px; }
.tree .selected { background: #d9d9d9; }
.hidden { opacity: 0.5; }
.vscroll { display: flex; flex-direction: column; width: 16px; margin: 1px 4px 0 0; background: #f0f0f0; color: #505050; }
.vscroll button { height: 18px; }
.vscroll .thumb { flex: 68; background: #cdcdcd; }
.before { flex: 154; }
.after { flex: 116; }
.files { display: flex; flex-direction: column; justify-content: space-between; flex: 1; min-width: 0; }
table { width: 100%; table-layout: fixed; border-collapse: collapse; color: #6d6d6d; }
th { position: relative; height: 28px; padding: 0 0 0 6px; border-right: 1px solid #e5e5e5; font-weight: 400; color: #4c607a; text-align: left; }
th:last-child { border: none; }
td { height: 24px; padding: 3px 0 0 6px; }
.c-name { width: 254px; padding-left: 17px; }
.c-date { width: 137px; }
.c-type { width: 113px; }
.c-size { width: 73px; }
.sort { position: absolute; top: -2px; left: 50%; color: #888; }
.file-name { padding-left: 18px; color: #000; }
.file-name svg { display: inline-block; margin-right: 4px; vertical-align: middle; }
.hscroll { display: flex; height: 15px; margin-bottom: 1px; background: #f0f0f0; color: #505050; }
.hscroll button { width: 18px; }
.hscroll .thumb { flex: 1; background: #cdcdcd; }

.status { display: flex; align-items: center; height: 24px; padding: 0 5px 0 14px; color: #1e395b; }
.status span { margin-right: auto; }
.mode { width: 22px; height: 22px; box-sizing: border-box; border: 1px solid transparent; }
.status .active { background: #cdeffc; border-color: #3c9fc6; }

/* Taskbar */
.taskbar { display: flex; height: 40px; background: linear-gradient(90deg, #02161f, #020d19 60%, #030816); color: #fff; }
.task { width: 48px; border-bottom: 2px solid transparent; border-top: 2px solid transparent; }
.task.edge { width: 52px; }
.taskbar .active { background: #36474f; border-top-color: #36474f; border-bottom-color: #76b9ed; }
.task-search { display: flex; align-items: center; gap: 9px; width: 288px; box-sizing: border-box; padding: 0 11px; background: #f2f2f2; border: 1px solid #d0d4d6; font-size: 14px; }
.task-search input::placeholder { color: #333; opacity: 1; }
.tray { display: flex; align-items: center; gap: 8px; margin-left: auto; }
.clock { width: 56px; line-height: 18px; text-align: center; }
.action { margin: 0 12px 0 8px; }
.peek { align-self: stretch; width: 4px; border-left: 1px solid #51606c; }
</style>
